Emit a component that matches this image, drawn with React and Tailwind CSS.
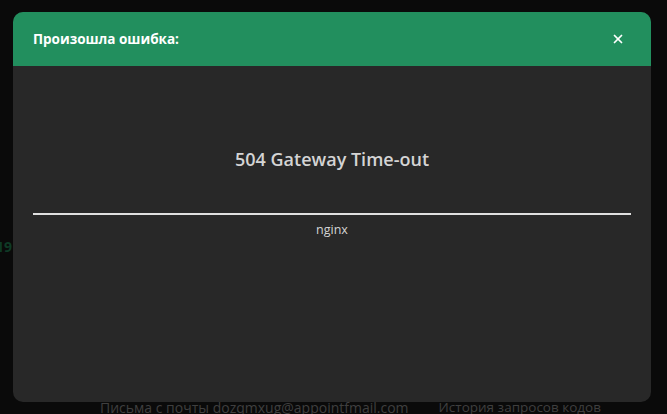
import React from 'react';
import { X } from 'lucide-react';

export default function App() {
  return (
    <div className="relative h-[414px] w-[667px] overflow-hidden bg-[#0a0a0a] font-['Open_Sans',sans-serif]">
      {/* page behind the overlay */}
      <div className="flex h-full flex-col justify-between">
        <div className="pt-[236px] text-[14px] font-bold text-[#0f3a26] -ml-[4px]">19</div>
        <div className="flex justify-center gap-[30px] -mb-[4px] pl-[34px] text-[14px] text-[#3f3f3f]">
          <span>Письма с почты dozqmxug@appointfmail.com</span>
          <span className="text-[13.5px]">История запросов кодов</span>
        </div>
      </div>

      {/* error modal */}
      <div className="absolute left-[13px] top-[12px] flex h-[390px] w-[638px] flex-col overflow-hidden rounded-[10px] bg-[#282828]">
        <div className="flex h-[54px] shrink-0 items-center justify-between bg-[#228f5e] pl-[20px] pr-[26px]">
          <span className="text-[13.5px] font-bold text-white">Произошла ошибка:</span>
          <X size={14} strokeWidth={3} className="text-white" />
        </div>
        <div className="px-[20px] pt-[80px] text-[#d4d4d4]">
          <h1 className="text-center text-[18px] font-semibold leading-[27px]">504 Gateway Time-out</h1>
          <hr className="mt-[40px] border-t-2 border-[#e0e0e0]" />
          <p className="mt-[6px] text-center text-[12.5px] leading-[18px]">nginx</p>
        </div>
      </div>
    </div>
  );
}
